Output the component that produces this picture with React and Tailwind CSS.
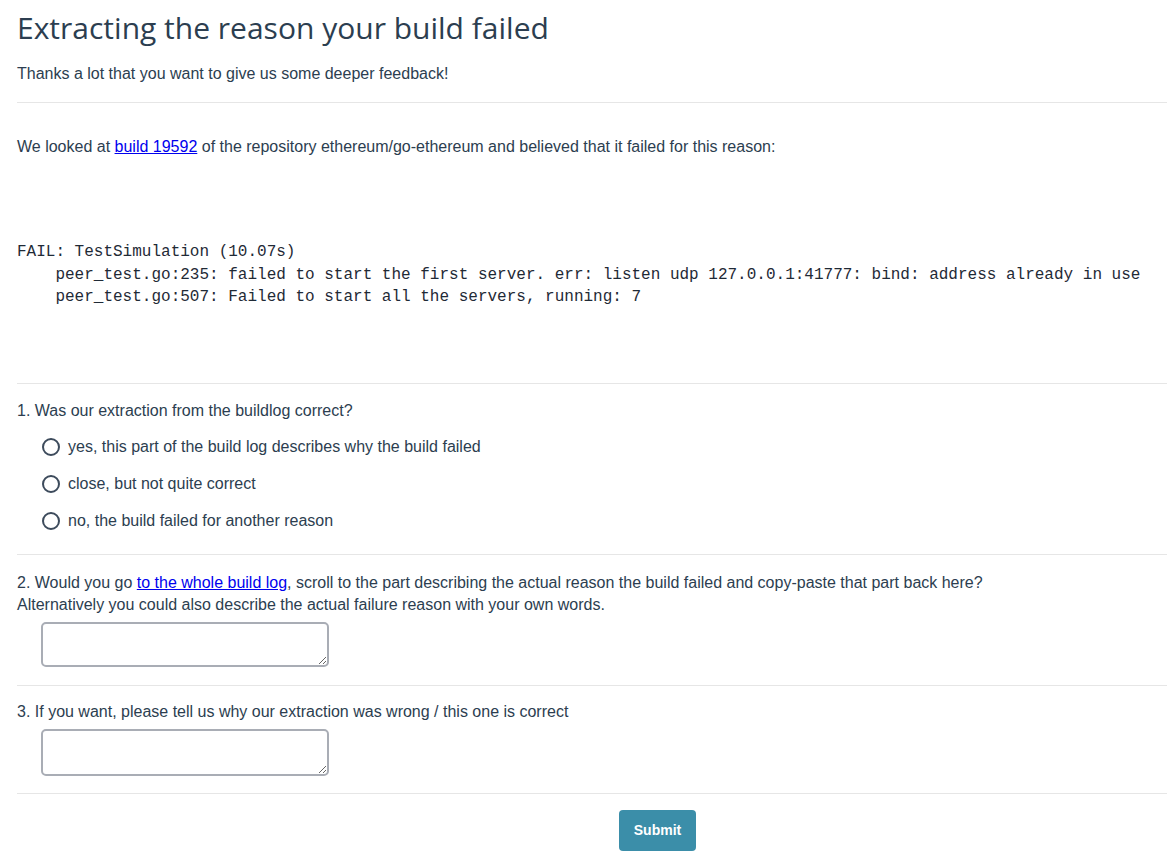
const sans = { fontFamily: '"Liberation Sans", Arial, sans-serif' };

const options = [
    'yes, this part of the build log describes why the build failed',
    'close, but not quite correct',
    'no, the build failed for another reason',
];

function Radio({ label }) {
    return (
        <label className="flex items-center gap-[8px] h-[37px]">
            <span className="w-[18px] h-[18px] rounded-full border-2 border-[#3d4b5c] bg-white shrink-0" />
            <span>{label}</span>
        </label>
    );
}

function Box({ tall }) {
    return (
        <textarea
            className={`block ml-[24px] w-[288px] ${tall ? 'h-[47px]' : 'h-[45px]'} rounded-[5px] border-2 border-[#a9adb5] bg-white resize-y outline-none`}
        />
    );
}

export default function App() {
    return (
        <div className="bg-white min-h-[866px] pl-[17px] text-[16px] text-[#2c3e50]" style={sans}>
            <h1 className="pt-[10px] text-[30px] leading-[36px] font-normal text-[#2c3e50] font-['Open_Sans',sans-serif]">
                Extracting the reason your build failed
            </h1>
            <p className="mt-[18px] leading-[20px]">Thanks a lot that you want to give us some deeper feedback!</p>
            <hr className="mt-[18px] border-t border-[#e6e6e6]" />

            <p className="mt-[34px] leading-[20px]">
                We looked at <a href="#" className="text-[#0000ee] underline">build 19592</a> of the repository ethereum/go-ethereum and believed that it failed for this reason:
            </p>

            <pre className="mt-[84px] text-[16px] leading-[22.5px] font-['Liberation_Mono',monospace] text-[#1f2a36]">
{`FAIL: TestSimulation (10.07s)
    peer_test.go:235: failed to start the first server. err: listen udp 127.0.0.1:41777: bind: address already in use
    peer_test.go:507: Failed to start all the servers, running: 7`}
            </pre>
            <hr className="mt-[74px] border-t border-[#e6e6e6]" />

            <p className="mt-[17px] leading-[20px]">1. Was our extraction from the buildlog correct?</p>
            <div className="mt-[8px] pl-[25px] flex flex-col">
                {options.map((o) => (
                    <Radio key={o} label={o} />
                ))}
            </div>
            <hr className="mt-[14px] border-t border-[#e6e6e6]" />

            <p className="mt-[17px] leading-[22px]">
                2. Would you go <a href="#" className="text-[#0000ee] underline">to the whole build log</a>, scroll to the part describing the actual reason the build failed and copy-paste that part back here?
                <br />
                Alternatively you could also describe the actual failure reason with your own words.
            </p>
            <div className="mt-[6px]">
                <Box />
            </div>
            <hr className="mt-[18px] border-t border-[#e6e6e6]" />

            <p className="mt-[16px] leading-[20px]">3. If you want, please tell us why our extraction was wrong / this one is correct</p>
            <div className="mt-[7px]">
                <Box tall />
            </div>
            <hr className="mt-[17px] border-t border-[#e6e6e6]" />

            <div className="mt-[16px] pl-[602px]">
                <button className="w-[77px] h-[41px] rounded-[4px] bg-[#3b8ea9] text-white text-[14px] font-bold">
                    Submit
                </button>
            </div>
        </div>
    );
}
